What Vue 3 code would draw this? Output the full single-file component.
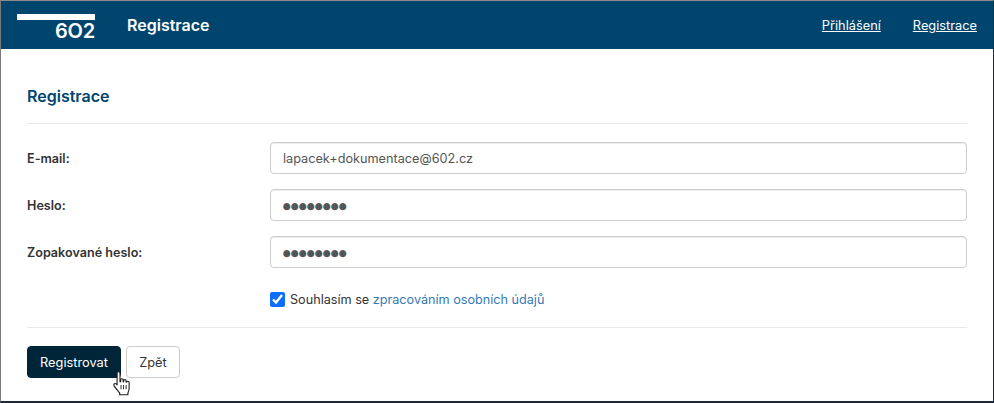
<script setup>
const fields = [
  { label: 'E-mail:', value: 'lapacek+dokumentace@602.cz', pass: false },
  { label: 'Heslo:', value: '●●●●●●●●', pass: true },
  { label: 'Zopakované heslo:', value: '●●●●●●●●', pass: true }
]
</script>

<template>
  <div class="screen">
    <header class="topbar">
      <div class="logo">
        <div class="logo-bar"></div>
        <div class="logo-text">6O2</div>
      </div>
      <div class="app-title">Registrace</div>
      <nav class="nav">
        <a class="nav-link">Přihlášení</a>
        <a class="nav-link">Registrace</a>
      </nav>
    </header>
    <main class="content">
      <h1 class="title">Registrace</h1>
      <div class="rows">
        <div v-for="f in fields" :key="f.label" class="row">
          <label class="label">{{ f.label }}</label>
          <input class="input" :class="{ pass: f.pass }" type="text" :value="f.value" readonly />
        </div>
      </div>
      <div class="consent">
        <input class="check" type="checkbox" checked />
        <span>Souhlasím se <a class="link">zpracováním osobních údajů</a></span>
      </div>
      <div class="actions">
        <button class="btn primary">Registrovat</button>
        <button class="btn secondary">Zpět</button>
        <svg class="cursor" width="21" height="27" viewBox="0 0 20 26">
          <path d="M6 1.5c1 0 1.6.7 1.6 1.7v8.2l.6-.1V9.6c0-1.6 2.4-1.6 2.4 0v1.7l.5.1v-1c0-1.5 2.4-1.5 2.4 0v1.3l.5.1c0-1.3 2.4-1.4 2.4.2v5.6c0 2-.6 3.2-1.2 4.6v1.6H7.3v-1.7c-1.2-1.6-4.4-5.2-5.4-6.8-1-1.7.9-3 2.2-1.8l.7.8V3.200C4.800 2.200 5.100 1.500 6 1.500z" fill="#fff" stroke="#222" stroke-width="1.100" stroke-linejoin="round"/>
          <path d="M8.600 14.500v4M11 14.500v4M13.500 14.500v4" stroke="#222" stroke-width="0.900" fill="none"/>
        </svg>
      </div>
    </main>
  </div>
</template>

<style>
html, body { margin: 0; padding: 0; background: #fff; }
</style>

<style scoped>
.screen {
  width: 994px;
  height: 403px;
  box-sizing: border-box;
  border-style: solid;
  border-width: 1px 1px 2px 1px;
  border-color: #8a8a8a #1c2a3a #1c2a3a #7a7a7a;
  background: #fff;
  font-family: Inter, "Liberation Sans", sans-serif;
  color: #333;
  overflow: hidden;
}
.topbar {
  height: 48px;
  background: #00456e;
  display: flex;
  align-items: center;
  color: #fff;
  padding: 0 16px;
}
.logo {
  width: 78px;
  display: flex;
  flex-direction: column;
  align-items: flex-end;
  align-self: flex-start;
  margin-right: 32px;
  margin-top: 13px;
}
.logo-bar {
  width: 78px;
  height: 6px;
  background: #fff;
}
.logo-text {
  font-size: 20px;
  line-height: 18px;
  font-weight: 600;
  margin-top: 2px;
  letter-spacing: -0.2px;
}
.app-title {
  font-size: 16px;
  font-weight: 600;
  flex: 1;
}
.nav {
  display: flex;
  gap: 32px;
}
.nav-link {
  color: #fff;
  font-size: 12.800px;
  text-decoration: underline;
}
.content {
  padding: 0 26px;
}
.title {
  margin: 0;
  height: 74px;
  line-height: 94px;
  font-size: 16px;
  font-weight: 600;
  color: #00456e;
  border-bottom: 1px solid #e9e9e9;
}
.rows {
  display: flex;
  flex-direction: column;
  gap: 15px;
  margin-top: 18px;
}
.row {
  display: flex;
  align-items: center;
}
.label {
  width: 243px;
  font-size: 12.600px;
  font-weight: 600;
  color: #333;
}
.input {
  width: 697px;
  height: 32px;
  box-sizing: border-box;
  border: 1px solid #ccc;
  border-radius: 4px;
  padding: 0 12px;
  font-family: inherit;
  font-size: 12.700px;
  color: #555;
  outline: none;
  box-shadow: inset 0 1px 1px rgba(0, 0, 0, 0.075);
}
.pass {
  font-family: "DejaVu Sans", sans-serif;
  font-size: 9.200px;
  padding-left: 11.500px;
}
.consent {
  display: flex;
  align-items: center;
  gap: 4px;
  margin: 23px 0 0 243px;
  font-size: 12.650px;
  height: 16px;
  color: #333;
}
.check {
  width: 15px;
  height: 15px;
  margin: 0;
  accent-color: #0d6efd;
}
.link {
  color: #337ab7;
}
.consent span {
  margin-left: 1px;
}
.actions {
  position: relative;
  display: flex;
  gap: 5px;
  margin-top: 20px;
  padding-top: 18px;
  border-top: 1px solid #e9e9e9;
}
.btn {
  height: 32px;
  border-radius: 4px;
  font-family: inherit;
  font-size: 12.800px;
  padding: 0;
  cursor: pointer;
}
.primary {
  width: 94px;
  background: #012538;
  border: 1px solid #012538;
  color: #fff;
}
.secondary {
  width: 54px;
  background: #fff;
  border: 1px solid #ccc;
  color: #333;
}
.cursor {
  position: absolute;
  left: 85px;
  top: 42px;
}
</style>
